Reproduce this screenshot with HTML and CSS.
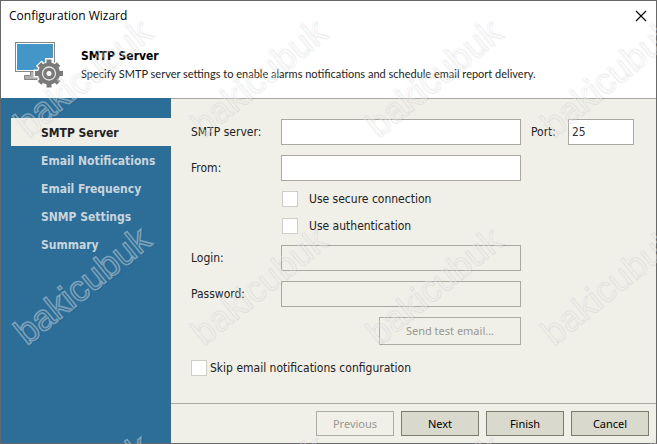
FILE: index.html
```html
<!DOCTYPE html>
<html lang="en">
<head>
<meta charset="utf-8">
<meta name="viewport" content="width=device-width, initial-scale=1">
<title>Configuration Wizard</title>
<link rel="stylesheet" href="styles.css">
</head>
<body>
<div class="window">
  <div class="titlebar">
    <span class="titlebar-text">Configuration Wizard</span>
    <button class="close" type="button" aria-label="Close">
      <svg width="12" height="12" viewBox="0 0 12 12"><path d="M1 1l10 10M11 1L1 11" fill="none" stroke="#000" stroke-width="1.1"/></svg>
    </button>
  </div>
  <header class="header">
    <svg class="header-icon" width="50" height="48" viewBox="0 0 50 48" aria-hidden="true">
      <path d="M15.500 29.500h8v4h3v4h-17v-4h6z" fill="#b0b0b0" stroke="#858585"/>
      <rect x=".5" y=".5" width="39" height="29" fill="#fff" stroke="#858585"/>
      <rect x="2" y="2" width="36" height="26" fill="#4596c8"/>
      <g fill="#fff">
        <circle cx="34" cy="31.500" r="12"/>
        <path d="M30 16h8v31h-8zM18.500 27.500h31v8h-31z"/>
        <path d="M30 17h8v29h-8zM19.500 27.500h29v8h-29z" transform="rotate(45 34 31.500)"/>
      </g>
      <g fill="#7a7a7a">
        <circle cx="34" cy="31.500" r="11"/>
        <path d="M31.500 17.500h5v28h-5zM20 29h28v5h-28z"/>
        <path d="M31.500 18h5v27h-5zM20.500 29h27v5h-27z" transform="rotate(45 34 31.500)"/>
      </g>
      <circle cx="34" cy="31.500" r="6.500" fill="none" stroke="#e4e4e4" stroke-width="1.300"/>
      <circle cx="34" cy="31.500" r="2.500" fill="#fff"/>
    </svg>
    <div>
      <h1 class="header-title">SMTP Server</h1>
      <p class="header-note">Specify SMTP server settings to enable alarms notifications and schedule email report delivery.</p>
    </div>
  </header>
  <div class="body">
    <nav class="steps">
      <a class="step step-current" href="#" aria-current="step">SMTP Server</a>
      <a class="step" href="#">Email Notifications</a>
      <a class="step" href="#">Email Frequency</a>
      <a class="step" href="#">SNMP Settings</a>
      <a class="step" href="#">Summary</a>
    </nav>
    <form class="panel">
      <div class="fields">
        <label for="server">SMTP server:</label>
        <input class="box" id="server" type="text">
        <label class="port-label" for="port">Port:</label>
        <input class="box" id="port" type="text" value="25">

        <label class="first" for="from">From:</label>
        <input class="box" id="from" type="text">

        <label class="check second"><input type="checkbox">Use secure connection</label>
        <label class="check second"><input type="checkbox">Use authentication</label>

        <label class="first" for="login">Login:</label>
        <input class="box" id="login" type="text" disabled>

        <label class="first" for="password">Password:</label>
        <input class="box" id="password" type="password" disabled>

        <button class="button send second" type="button" disabled>Send test email...</button>

        <label class="check skip"><input type="checkbox">Skip email notifications configuration</label>
      </div>
      <div class="footer">
        <button class="button" type="button" disabled>Previous</button>
        <button class="button" type="button">Next</button>
        <button class="button" type="button">Finish</button>
        <button class="button" type="button">Cancel</button>
      </div>
    </form>
  </div>
</div>
<svg class="watermark" aria-hidden="true">
  <defs>
    <g id="mark" transform="rotate(-39)">
      <text class="mark-shade" x="1" y="2">bakicubuk</text>
      <text class="mark-line" x="0" y="0">bakicubuk</text>
    </g>
  </defs>
  <g id="markrow">
    <use href="#mark" x="27" y="138"/>
    <use href="#mark" x="202" y="138"/>
    <use href="#mark" x="377" y="138"/>
    <use href="#mark" x="552" y="138"/>
  </g>
  <use href="#markrow" y="208"/>
  <use href="#markrow" y="416"/>
</svg>
</body>
</html>
```
FILE: styles.css
```css
* { box-sizing: border-box; }

body {
  margin: 0;
  font: 12px/16px "DejaVu Sans Condensed", "Noto Sans", sans-serif;
  color: #222;
}

.window {
  display: flex;
  flex-direction: column;
  min-height: 100vh;
  border: 1px solid #686868;
  background: #fff;
}

.titlebar {
  display: flex;
  justify-content: space-between;
  align-items: center;
  height: 29px;
  padding: 0 9px 0 8px;
  font-family: "Open Sans", sans-serif;
  color: #000;
}

.close {
  display: flex;
  padding: 0;
  border: 0;
  background: none;
}

.header {
  display: flex;
  gap: 16px;
  height: 68px;
  padding: 12px 14px 0;
}

.header-icon { flex: none; }

.header-title {
  margin: 6px 0 2px;
  font-size: 12px;
  line-height: 16px;
  color: #000;
}

.header-note {
  margin: 0;
  font-family: Lato, sans-serif;
  font-size: 11px;
}

.body {
  display: flex;
  flex: 1;
}

.steps {
  flex: none;
  width: 170px;
  padding: 20px 0 20px 10px;
  background: #2d6e99;
}

.step {
  display: block;
  padding: 7px 0 5px 30px;
  font-weight: bold;
  color: #c9d5dc;
  text-decoration: none;
}

.step-current {
  background: #f0efe8;
  color: #222;
}

.panel {
  display: flex;
  flex: 1;
  flex-direction: column;
  justify-content: space-between;
  border-top: 1px solid #aaa9a2;
  background: #f0efe8;
}

.fields {
  display: grid;
  grid-template-columns: 90px minmax(0, 1fr) 47px 66px;
  row-gap: 10px;
  align-items: center;
  padding: 20px 22px 0 20px;
}

.first { grid-column: 1; }
.second { grid-column: 2; }
.port-label { padding-left: 10px; }

.box {
  width: 100%;
  height: 26px;
  padding: 0 3px;
  border: 1px solid #aaa9a0;
  border-radius: 0;
  background: #fff;
  font: inherit;
  color: #333;
}

.box:disabled { background: transparent; }

.check {
  display: flex;
  gap: 11px;
  height: 17px;
  padding-left: 1px;
}

.check input {
  appearance: none;
  flex: none;
  width: 16px;
  height: 16px;
  margin: 0;
  border: 1px solid #cfcec9;
  background: #fff;
}

.skip {
  grid-column: 1 / -1;
  gap: 3px;
  margin-top: 5px;
  padding-left: 0;
}

.button {
  width: 78px;
  height: 25px;
  padding: 0;
  border: 1px solid #7c7c6e;
  background: #d9d9cd;
  font: 11px/16px "Noto Sans", sans-serif;
  color: #000;
}

.button:disabled {
  border-color: #adaca4;
  background: transparent;
  color: #999892;
}

.send {
  justify-self: end;
  width: 142px;
  height: 28px;
}

.footer {
  display: flex;
  justify-content: flex-end;
  gap: 7px;
  padding: 7px;
  border-top: 1px solid #aaa9a2;
}

.watermark {
  position: absolute;
  inset: 0;
  width: 100%;
  height: 100%;
  pointer-events: none;
  font: 36px "Liberation Sans", sans-serif;
}

.mark-line {
  fill: none;
  stroke: #eee;
  stroke-opacity: 0.42;
  stroke-width: 1.5px;
}

.mark-shade {
  fill: none;
  stroke: #000;
  stroke-opacity: 0.06;
  stroke-width: 1.5px;
}
```
